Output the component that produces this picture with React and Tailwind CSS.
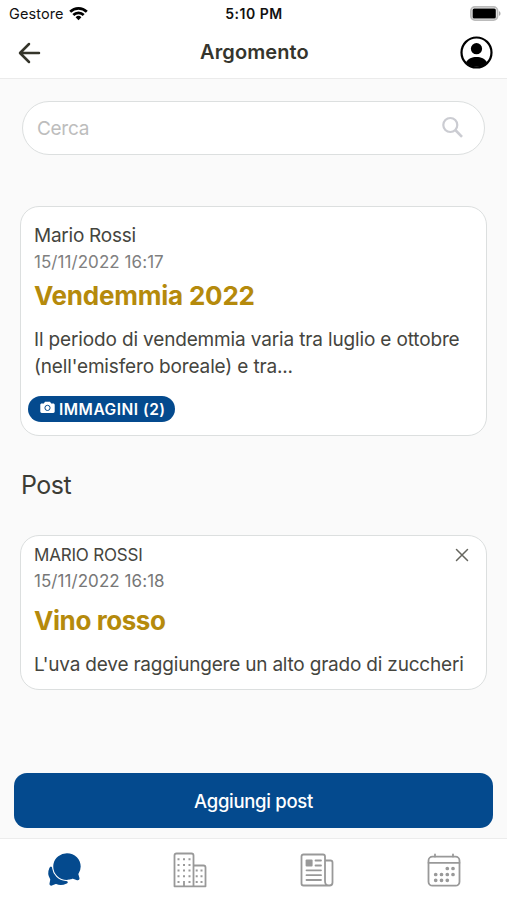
import React from "react";
import { IoChatbubbles } from "react-icons/io5";

function StatusBar() {
  return (
    <div className="flex h-[27px] items-center justify-between pl-[9px] pr-[8px] text-[#111]">
      <div className="flex w-[120px] items-center gap-[5px]">
        <span className="text-[14.5px] leading-[27px] tracking-[0.1px]">Gestore</span>
        <svg className="-mt-px" width="19" height="15" viewBox="0 0 19 15" fill="none" stroke="#000" strokeWidth="2.7">
          <path d="M1.2 5.7a11.8 11.8 0 0 1 16.6 0" />
          <path d="M4.3 9a7.4 7.4 0 0 1 10.4 0" />
          <path d="M9.5 14.2L6.6 11.3a4.1 4.1 0 0 1 5.8 0z" fill="#000" stroke="none" />
        </svg>
      </div>
      <span className="text-[14px] font-semibold leading-[27px] tracking-[0.5px]">5:10 PM</span>
      <div className="-mr-[2px] flex w-[122px] justify-end">
        <svg className="-mt-px" width="31" height="15" viewBox="0 0 31 15">
          <rect x="0.9" y="0.9" width="26.600" height="13.2" rx="4" fill="#fff" stroke="#bbb" strokeWidth="1.800" />
          <rect x="2.6" y="2.6" width="23.2" height="9.8" rx="1.500" fill="#000" />
          <path d="M29 5.2c2 .6 2 4 0 4.600z" fill="#aaa" />
        </svg>
      </div>
    </div>
  );
}

function Header() {
  return (
    <header className="flex h-[52px] items-center justify-between border-b border-[#ebebeb] pl-[18px] pr-[14px]">
      <button className="w-[31px]">
        <svg width="23" height="22" viewBox="0 0 23 22" fill="none" stroke="#35352b" strokeWidth="2.500" strokeLinecap="round" strokeLinejoin="round">
          <path d="M11 2L2 11l9 9M2.500 11H21" />
        </svg>
      </button>
      <h1 className="-mt-[2px] text-[20px] font-semibold leading-6 tracking-[0.100px] text-[#35352d]">Argomento</h1>
      <svg className="-mt-px" width="33" height="33" viewBox="0 0 33 33">
        <circle cx="16.500" cy="16.500" r="15" fill="#fff" stroke="#000" strokeWidth="2.200" />
        <circle cx="16.500" cy="12.700" r="5.600" />
        <path d="M6 26.400C8 22.500 12 21 16.500 21s8.500 1.500 10.500 5.400a15 15 0 0 1-21 0z" />
      </svg>
    </header>
  );
}

function SearchBox() {
  return (
    <div className="mx-[22px] mt-[22px] flex h-[54px] items-center justify-between rounded-full border-[1.5px] border-[#dcdfdf] bg-white pl-[14px] pr-[20px]">
      <span className="pt-[2px] text-[19px] tracking-[-0.3px] text-[#bdbdbd]">Cerca</span>
      <svg className="-mt-px" width="23" height="23" viewBox="0 0 23 23" fill="none" stroke="#cbccd2" strokeWidth="2.200">
        <circle cx="9.300" cy="9" r="7" />
        <path d="M14.300 14L21 20.800" strokeWidth="2.600" />
      </svg>
    </div>
  );
}

function TopicCard() {
  return (
    <section className="mx-[20px] mt-[51px] h-[230px] rounded-[19px] border-[1.5px] border-[#dcdfdf] bg-white px-[13px] pt-[15px]">
      <p className="text-[19px] leading-[27px] tracking-[-0.25px] text-[#45453e]">Mario Rossi</p>
      <p className="text-[17px] leading-[26px] tracking-[0.06px] text-[#808080]">15/11/2022 16:17</p>
      <h2 className="mt-[3px] text-[26px] font-bold leading-[36px] tracking-[-0.22px] text-[#b58a0c]">Vendemmia 2022</h2>
      <p className="mt-[12px] whitespace-nowrap text-[19px] leading-[27px] tracking-[-0.15px] text-[#45453e]">
        Il periodo di vendemmia varia tra luglio e ottobre
        <br />
        (nell'emisfero boreale) e tra...
      </p>
      <button className="-ml-[6px] mt-[16px] flex h-[26px] w-[147px] items-center gap-[4px] rounded-full bg-[#044a8e] pl-[12px] text-white">
        <svg className="-mt-[3px]" width="15" height="13" viewBox="0 0 15 13" fill="#fff">
          <path d="M1.700 2.500h2.100L5 .8h5l1.200 1.700h2.100c.8 0 1.400.6 1.400 1.400v6.700c0 .8-.6 1.400-1.400 1.400H1.700c-.8 0-1.400-.6-1.400-1.400V3.900c0-.8.6-1.400 1.400-1.400z" />
          <circle cx="7.500" cy="6.900" r="2.600" stroke="#044a8e" strokeWidth="1" />
        </svg>
        <span className="whitespace-nowrap pt-[2px] text-[15.5px] font-semibold tracking-[0.5px]">IMMAGINI (2)</span>
      </button>
    </section>
  );
}

function PostCard() {
  return (
    <section className="mx-[20px] mt-[34px] h-[155px] rounded-[19px] border-[1.5px] border-[#dcdfdf] bg-white px-[13px] pt-[6px]">
      <div className="flex items-center justify-between">
        <p className="text-[17px] leading-[26px] tracking-[-0.18px] text-[#45453e]">MARIO ROSSI</p>
        <svg className="mr-[4px]" width="14" height="14" viewBox="0 0 14 14" stroke="#66665f" strokeWidth="1.500" strokeLinecap="round">
          <path d="M1.500 1.500l11 11M12.500 1.500l-11 11" />
        </svg>
      </div>
      <p className="text-[17px] leading-[26px] tracking-[0.06px] text-[#777]">15/11/2022 16:18</p>
      <h2 className="mt-[9px] text-[26px] font-bold leading-[36px] tracking-[-0.42px] text-[#b58a0c]">Vino rosso</h2>
      <p className="mt-[12px] whitespace-nowrap text-[19px] leading-[27px] tracking-[-0.2px] text-[#45453e]">
        L'uva deve raggiungere un alto grado di zuccheri
      </p>
    </section>
  );
}

function BuildingIcon() {
  return (
    <svg width="34" height="36" viewBox="0 0 34 36" fill="none" stroke="#999" strokeWidth="1.800" strokeLinejoin="round">
      <path d="M1.500 34.300V3.500q0-2 2-2h15q2 0 2 2V34.300zM20.500 13.500h10q2 0 2 2V34.300h-12M11 34v-5" />
      <path
        d="M5.500 6.200v2M11 6.200v2M16.500 6.200v2M5.500 11.900v2M11 11.900v2M16.500 11.900v2M5.500 17.600v2M11 17.600v2M16.500 17.600v2M5.500 23.300v2M11 23.300v2M16.500 23.300v2M5.500 29v2M16.500 29v2M23.700 17.600v2M28.500 17.600v2M23.700 23.300v2M28.500 23.300v2M23.700 29v2M28.500 29v2"
        strokeWidth="2"
      />
    </svg>
  );
}

function NewsIcon() {
  return (
    <svg width="34" height="34" viewBox="0 0 34 34" fill="none" stroke="#999" strokeWidth="1.800" strokeLinecap="round">
      <path d="M25 28V3.500q0-2-2-2H3.500q-2 0-2 2v27q0 2 2 2h26q3 0 3-3V9.500q0-2-2-2H25M25 28q0 4.500 3.500 4.500" />
      <path d="M15.500 7.500h5.500M15.500 12.500h5.500M6.500 17.300H21M6.500 22.200H21M6.500 27H21" />
      <rect x="5.600" y="6.500" width="7" height="7" rx="1" fill="#999" stroke="none" />
    </svg>
  );
}

function CalendarIcon() {
  return (
    <svg width="34" height="34" viewBox="0 0 34 34" fill="none" stroke="#999" strokeWidth="1.800" strokeLinecap="round">
      <rect x="1.500" y="3.700" width="31" height="29" rx="4" />
      <path d="M1.500 9.800h31M8 1.500v2M26 1.500v2" />
      <path
        d="M20.300 15.500h.01M26 15.500h.01M8.700 21.500h.01M14.500 21.500h.01M20.300 21.500h.01M26 21.500h.01M8.700 27.300h.01M14.500 27.300h.01M20.300 27.300h.01"
        strokeWidth="3.700"
      />
    </svg>
  );
}

function TabBar() {
  return (
    <nav className="grid h-[62px] grid-cols-4 border-t border-[#ececec] bg-white">
      <button className="flex items-center justify-center pl-[3px]">
        <IoChatbubbles className="text-[#044a8e]" size={37} />
      </button>
      <button className="flex items-center justify-center">
        <BuildingIcon />
      </button>
      <button className="flex items-center justify-center">
        <NewsIcon />
      </button>
      <button className="flex items-center justify-center">
        <CalendarIcon />
      </button>
    </nav>
  );
}

export default function App() {
  return (
    <div className="flex h-[900px] w-[507px] flex-col overflow-hidden bg-white font-['Inter',sans-serif]">
      <StatusBar />
      <Header />
      <main className="flex flex-1 flex-col bg-[#fafafa]">
        <SearchBox />
        <TopicCard />
        <h2 className="ml-[21px] mt-[33px] text-[25px] leading-[32px] tracking-[-0.5px] text-[#3c3c35]">Post</h2>
        <PostCard />
        <button className="mx-[14px] mt-[83px] h-[55px] rounded-[13px] bg-[#044a8e] pt-[2px] text-[18.5px] font-medium tracking-[-0.3px] text-white">
          Aggiungi post
        </button>
      </main>
      <TabBar />
    </div>
  );
}
